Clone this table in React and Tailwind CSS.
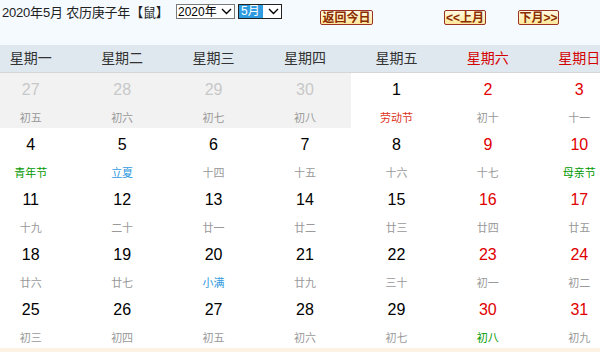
import React from 'react';

const WEEK = ['星期一', '星期二', '星期三', '星期四', '星期五', '星期六', '星期日'];

const FONT = { fontFamily: '"Liberation Sans", "Noto Sans CJK SC", sans-serif' };

// [day, lunar, lunarColor, prevMonth]
const ROWS = [
  [[27, '初五', '', true], [28, '初六', '', true], [29, '初七', '', true], [30, '初八', '', true], [1, '劳动节', 'text-[#dd3322]'], [2, '初十'], [3, '十一']],
  [[4, '青年节', 'text-[#009900]'], [5, '立夏', 'text-[#3399dd]'], [6, '十四'], [7, '十五'], [8, '十六'], [9, '十七'], [10, '母亲节', 'text-[#009900]']],
  [[11, '十九'], [12, '二十'], [13, '廿一'], [14, '廿二'], [15, '廿三'], [16, '廿四'], [17, '廿五']],
  [[18, '廿六'], [19, '廿七'], [20, '小满', 'text-[#3399dd]'], [21, '廿九'], [22, '三十'], [23, '初一'], [24, '初二']],
  [[25, '初三'], [26, '初四'], [27, '初五'], [28, '初六'], [29, '初七'], [30, '初八', 'text-[#009900]'], [31, '初九']],
];

const Chevron = () => (
  <svg width="11" height="7" viewBox="0 0 11 7" className="shrink-0">
    <polyline points="1,1 5.5,5.5 10,1" fill="none" stroke="#000" strokeWidth="1.4" />
  </svg>
);

const NavButton = ({ children, className }) => (
  <div
    className={
      'shrink-0 h-[15px] flex items-center justify-center border border-[#9a3324] rounded-[2px] bg-gradient-to-b from-[#fffbe0] to-[#ffe79a] text-[12px] font-bold leading-none text-[#8a2c00] whitespace-nowrap ' +
      (className || '')
    }
  >
    {children}
  </div>
);

const App = () => {
  return (
    <div className="w-[600px] h-[352px] overflow-hidden bg-[#f5faff]" style={FONT}>
      <div className="h-[45px] flex items-start">
        <div className="shrink-0 w-[176px] pl-[2px] pt-[4px] text-[13px] leading-[17px] text-[#222] whitespace-nowrap overflow-hidden tracking-[-0.2px]">
          2020年5月 农历庚子年【鼠】
        </div>
        <div className="shrink-0 mt-[4px] w-[59px] h-[15px] border border-[#7a7a7a] bg-white flex items-center justify-between pl-[1px] pr-[2px]">
          <span className="text-[12px] leading-none text-black">2020年</span>
          <Chevron />
        </div>
        <div className="shrink-0 ml-[3px] mt-[4px] w-[44px] h-[15px] border border-[#222] bg-white flex items-center justify-between pr-[2px]">
          <span className="h-full w-[24px] bg-[#2f9be0] text-white text-[12px] leading-[13px] pl-[2px]">5月</span>
          <Chevron />
        </div>
        <NavButton className="ml-[38px] mt-[10px] w-[53px]">返回今日</NavButton>
        <NavButton className="ml-[71px] mt-[10px] w-[42px]">&lt;&lt;上月</NavButton>
        <NavButton className="ml-[32px] mt-[10px] w-[41px]">下月&gt;&gt;</NavButton>
      </div>

      <div className="w-[600px] overflow-hidden bg-white">
        <div className="-ml-[15px] w-[640px]">
          <div className="grid grid-cols-7 h-[28px] bg-[#dfe8ef] border-b border-[#d6d6d6]">
            {WEEK.map((w, i) => (
              <div
                key={w}
                className={
                  'flex items-center justify-center text-[14px] ' +
                  (i >= 5 ? 'text-[#d40000]' : 'text-[#333]')
                }
              >
                {w}
              </div>
            ))}
          </div>
          {ROWS.map((row, r) => (
            <div key={r} className="grid grid-cols-7 h-[55px]">
              {row.map(([day, lunar, color, prev], i) => {
                const weekend = i >= 5;
                return (
                  <div
                    key={i}
                    className={'flex flex-col items-center pt-[8px] ' + (prev ? 'bg-[#f2f2f2]' : '')}
                  >
                    <div
                      className={
                        'text-[16px] leading-[18px] ' +
                        (prev ? 'text-[#c8c8c8]' : weekend ? 'text-[#e00000]' : 'text-black')
                      }
                    >
                      {day}
                    </div>
                    <div className={'mt-[12px] text-[11px] leading-[14px] ' + (color || 'text-[#999]')}>
                      {lunar}
                    </div>
                  </div>
                );
              })}
            </div>
          ))}
          <div className="h-[10px] bg-[#fcf3e4]" />
        </div>
      </div>
    </div>
  );
};

export default App;
